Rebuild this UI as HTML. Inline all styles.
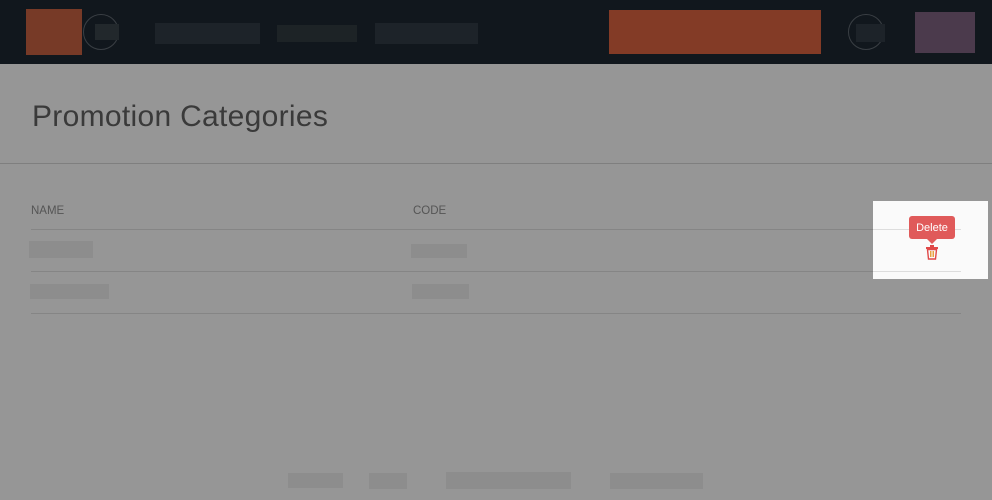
<!DOCTYPE html>
<html><head><style>
*{margin:0;padding:0;box-sizing:border-box}
body{width:992px;height:500px;overflow:hidden;background:#969696;position:relative;font-family:"Liberation Sans",sans-serif}
.a{position:absolute}
</style></head><body>
<div class="a" style="left:0;top:0;width:992px;height:64px;background:#11171d"></div>
<div class="a" style="left:26px;top:9px;width:56px;height:46px;background:#773a27"></div>
<div class="a" style="left:83px;top:14px;width:36px;height:36px;border:1px solid #3a3f44;border-radius:50%"></div>
<div class="a" style="left:95px;top:24px;width:24px;height:16px;background:#22282c"></div>
<div class="a" style="left:155px;top:23px;width:105px;height:21px;background:#1d2329"></div>
<div class="a" style="left:277px;top:25px;width:80px;height:17px;background:#1d2326"></div>
<div class="a" style="left:375px;top:23px;width:103px;height:21px;background:#1d2329"></div>
<div class="a" style="left:609px;top:10px;width:212px;height:44px;background:#833b26"></div>
<div class="a" style="left:848px;top:14px;width:36px;height:36px;border:1px solid #3a3f44;border-radius:50%"></div>
<div class="a" style="left:856px;top:24px;width:29px;height:18px;background:#1d2329"></div>
<div class="a" style="left:915px;top:12px;width:60px;height:41px;background:#4b3a4c"></div>
<div class="a" style="left:32px;top:100px;font-size:30px;color:#3a3a3a;white-space:nowrap;letter-spacing:0.3px">Promotion Categories</div>
<div class="a" style="left:0;top:163px;width:992px;height:1px;background:#7f7f7f"></div>
<div class="a" style="left:31px;top:205px;font-size:11.5px;color:#555">NAME</div>
<div class="a" style="left:413px;top:205px;font-size:11.5px;color:#555">CODE</div>
<div class="a" style="left:31px;top:229px;width:930px;height:1px;background:#858585"></div>
<div class="a" style="left:31px;top:271px;width:930px;height:1px;background:#858585"></div>
<div class="a" style="left:31px;top:313px;width:930px;height:1px;background:#858585"></div>
<div class="a" style="left:29px;top:241px;width:64px;height:17px;background:#8d8d8d"></div>
<div class="a" style="left:411px;top:244px;width:56px;height:14px;background:#8d8d8d"></div>
<div class="a" style="left:30px;top:284px;width:79px;height:15px;background:#8d8d8d"></div>
<div class="a" style="left:412px;top:284px;width:57px;height:15px;background:#8d8d8d"></div>
<div class="a" style="left:873px;top:201px;width:115px;height:78px;background:#fafafa"></div>
<div class="a" style="left:873px;top:229px;width:88px;height:1px;background:#ddd"></div>
<div class="a" style="left:873px;top:271px;width:88px;height:1px;background:#ddd"></div>
<div class="a" style="left:909px;top:216px;width:46px;height:23px;background:#e05a5a;border-radius:3px;color:#fff;font-size:11px;line-height:24px;text-align:center">Delete</div>
<div class="a" style="left:927px;top:239px;width:0;height:0;border-left:5px solid transparent;border-right:5px solid transparent;border-top:5px solid #e05a5a"></div>
<svg class="a" style="left:925px;top:245px" width="14" height="15" viewBox="0 0 14 15"><rect x="1" y="2" width="12" height="2" fill="#e04848"/><rect x="5" y="0" width="4" height="2" fill="#e04848"/><path d="M2.5 4.5h9l-1 9.5h-7z" fill="none" stroke="#e04848" stroke-width="1.4"/><path d="M5.5 6v6M7 6v6M8.5 6v6" stroke="#e8a040" stroke-width="1"/></svg>
<div class="a" style="left:288px;top:473px;width:55px;height:15px;background:#8d8d8d"></div>
<div class="a" style="left:369px;top:473px;width:38px;height:16px;background:#8d8d8d"></div>
<div class="a" style="left:446px;top:472px;width:125px;height:17px;background:#8d8d8d"></div>
<div class="a" style="left:610px;top:473px;width:93px;height:16px;background:#8d8d8d"></div>
</body></html>
